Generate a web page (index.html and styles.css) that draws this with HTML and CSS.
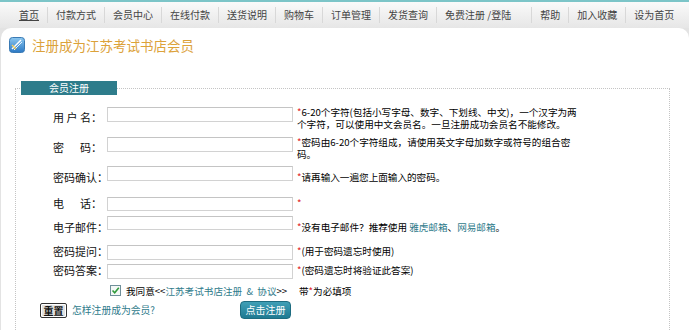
FILE: index.html
```html
<!DOCTYPE html>
<html lang="zh-CN">
<head>
<meta charset="UTF-8" />
<title>注册成为江苏考试书店会员</title>
<link rel="stylesheet" href="styles.css">
</head>
<body>

  <div class="topnav">
    <a href="#" class="cur">首页</a>
    <a href="#">付款方式</a>
    <a href="#">会员中心</a>
    <a href="#">在线付款</a>
    <a href="#">送货说明</a>
    <a href="#">购物车</a>
    <a href="#">订单管理</a>
    <a href="#">发货查询</a>
    <a href="#" class="wide">免费注册 /登陆</a>
    <a href="#">帮助</a>
    <a href="#">加入收藏</a>
    <a href="#">设为首页</a>
  </div>

  <div class="panel">
    <h2 class="title">
      <svg width="16" height="16" viewBox="0 0 16 16">
        <defs>
          <linearGradient id="ig" x1="0" y1="0" x2="0" y2="1">
            <stop offset="0" stop-color="#8cc8f0"/>
            <stop offset="1" stop-color="#2b78c4"/>
          </linearGradient>
        </defs>
        <rect x="0.5" y="0.5" width="15" height="15" rx="3" fill="url(#ig)" stroke="#3a7ab4"/>
        <path d="M3 12 L12 3" stroke="#fff" stroke-width="1.4"/>
        <path d="M5 13 L13 5" stroke="#e8f4ff" stroke-width="1"/>
        <path d="M3 8 L7 12" stroke="#ffd25a" stroke-width="1.2"/>
      </svg>
      <span>注册成为江苏考试书店会员</span>
    </h2>

    <fieldset class="regbox">
      <legend>会员注册</legend>

      <div class="row tall h30">
        <span class="lbl sp"><b>用</b><b>户</b><b>名：</b></span>
        <input type="text" class="inp" />
        <span class="hint"><em>*</em>6-20个字符(包括小写字母、数字、下划线、中文)，一个汉字为两<br>个字符，可以使用中文会员名。一旦注册成功会员名不能修改。</span>
      </div>

      <div class="row tall h29">
        <span class="lbl sp"><b>密</b><b>码：</b></span>
        <input type="password" class="inp" />
        <span class="hint"><em>*</em>密码由6-20个字符组成，请使用英文字母加数字或符号的组合密<br>码。</span>
      </div>

      <div class="row low h31">
        <span class="lbl">密码确认：</span>
        <input type="password" class="inp" />
        <span class="hint"><em>*</em>请再输入一遍您上面输入的密码。</span>
      </div>

      <div class="row h19">
        <span class="lbl sp"><b>电</b><b>话：</b></span>
        <input type="text" class="inp sm" />
        <span class="hint"><em>*</em></span>
      </div>

      <div class="row low h29">
        <span class="lbl">电子邮件：</span>
        <input type="text" class="inp sm" />
        <span class="hint"><em>*</em>没有电子邮件？推荐使用 <a href="#">雅虎邮箱</a>、<a href="#">网易邮箱</a>。</span>
      </div>

      <div class="row h19">
        <span class="lbl">密码提问：</span>
        <input type="text" class="inp" />
        <span class="hint"><em>*</em>(用于密码遗忘时使用)</span>
      </div>

      <div class="row h19">
        <span class="lbl">密码答案：</span>
        <input type="text" class="inp" />
        <span class="hint"><em>*</em>(密码遗忘时将验证此答案)</span>
      </div>

      <div class="agree">
        <span class="chk">
          <svg width="9" height="9" viewBox="0 0 9 9"><path d="M1.5 4.5 L3.7 6.8 L7.8 1.8" fill="none" stroke="#2f9a3a" stroke-width="1.6"/></svg>
        </span>
        <span class="agree-text">我同意&lt;&lt;<a href="#">江苏考试书店注册&nbsp;&nbsp;&amp;&nbsp;&nbsp;协议</a>&gt;&gt;</span>
        <span>带<em>*</em>为必填项</span>
      </div>

      <div class="actions">
        <button class="reset-btn">重置</button>
        <a href="#" class="howto">怎样注册成为会员?</a>
        <button class="submit-btn">点击注册</button>
      </div>
    </fieldset>
  </div>

</body>
</html>
```

FILE: styles.css
```css
body {
  margin: 0;
  background: #e3e3e3;
  font-family: "Noto Sans CJK SC", "DejaVu Sans", sans-serif;
  font-size: 11px;
  line-height: 12px;
  color: #111;
  overflow: hidden;
}
a {
  color: #2f7b8b;
  text-decoration: none;
}

/* верхнее меню */
.topnav {
  height: 26px;
  border-top: 2px solid #7cc5c8;
  background: linear-gradient(#fafafa, #e6e6e6);
  display: flex;
  align-items: center;
  padding-left: 11px;
  font-size: 10px;
}
.topnav a {
  color: #444;
  padding: 0 8px;
  line-height: 16px;
  border-left: 1px solid #d8d8d8;
  white-space: nowrap;
}
.topnav a:first-child {
  border-left: none;
  text-decoration: underline;
}
.topnav a.wide {
  padding-right: 20px;
}

.panel {
  background: #fff;
  margin-left: 1px;
  height: 302px;
  border-radius: 10px 10px 0 0;
}
.title {
  margin: 0;
  padding: 9px 0 0 8px;
  height: 16px;
  display: flex;
  align-items: center;
  font-weight: normal;
  font-size: 13.5px;
  line-height: 16px;
  color: #dca23a;
}
.title svg {
  margin-right: 7px;
  flex-shrink: 0;
}

.regbox {
  margin: 28px 19px 0 14px;
  padding: 10px 0 0;
  border: 1px dotted #c4c4c4;
  border-bottom: none;
  height: 260px;
}
.regbox legend {
  margin-left: 5px;
  padding: 0 0 0 28px;
  width: 96px;
  box-sizing: border-box;
  height: 14px;
  line-height: 14px;
  font-size: 10px;
  text-align: left;
  background: #2e7c8b;
  color: #fff;
}

.row {
  display: flex;
  align-items: flex-start;
  padding-left: 37px;
}
.h30 { height: 30px; }
.h29 { height: 29px; }
.h31 { height: 31px; }
.h19 { height: 19px; }

.lbl {
  width: 54px;
  flex-shrink: 0;
  white-space: nowrap;
  margin-top: 2px;
}
.lbl.sp {
  display: flex;
  justify-content: space-between;
  padding-right: 5px;
  box-sizing: border-box;
}
.lbl b {
  font-weight: normal;
}
.inp {
  width: 186px;
  height: 15px;
  margin: 2px 0 0;
  padding: 0 2px;
  box-sizing: border-box;
  border: 1px solid #d2d2d2;
  border-top-color: #c4c4c4;
  flex-shrink: 0;
  font: inherit;
}
.inp.sm {
  height: 14px;
}
.hint {
  margin: 3px 0 0 4px;
  white-space: nowrap;
  font-size: 9.6px;
  line-height: 11.5px;
  color: #000;
}
.tall .lbl {
  margin-top: 6px;
}
.tall .hint {
  margin-top: 2px;
}
.low .lbl {
  margin-top: 7px;
}
.low .hint {
  margin-top: 8px;
}
em {
  font-style: normal;
  color: #e0262a;
}

.agree {
  height: 19px;
  display: flex;
  align-items: center;
  padding-left: 94px;
  font-size: 9.6px;
  color: #000;
}
.chk {
  width: 11px;
  height: 11px;
  box-sizing: border-box;
  border: 1px solid #6f8f9a;
  background: #f4f8f6;
  display: flex;
  align-items: center;
  justify-content: center;
  margin-right: 5px;
}
.agree-text {
  width: 173px;
}

.actions {
  height: 20px;
  display: flex;
  align-items: center;
  padding-left: 24px;
  font-size: 9.8px;
}
.reset-btn {
  width: 27px;
  height: 15px;
  padding: 0;
  border: 1px solid #333;
  border-radius: 2px;
  box-shadow: inset 0 0 0 1px #fff;
  background: #e2e2e2;
  font: bold 10px/11px "Noto Sans CJK SC", sans-serif;
  color: #111;
}
.howto {
  margin-left: 5px;
  width: 168px;
}
.submit-btn {
  width: 51px;
  height: 18px;
  padding: 0;
  border: 1px solid #1d6c80;
  border-radius: 4px;
  background: linear-gradient(#3f9fb6, #1f7a92);
  color: #fff;
  font: 10px/12px "Noto Sans CJK SC", sans-serif;
}
```
